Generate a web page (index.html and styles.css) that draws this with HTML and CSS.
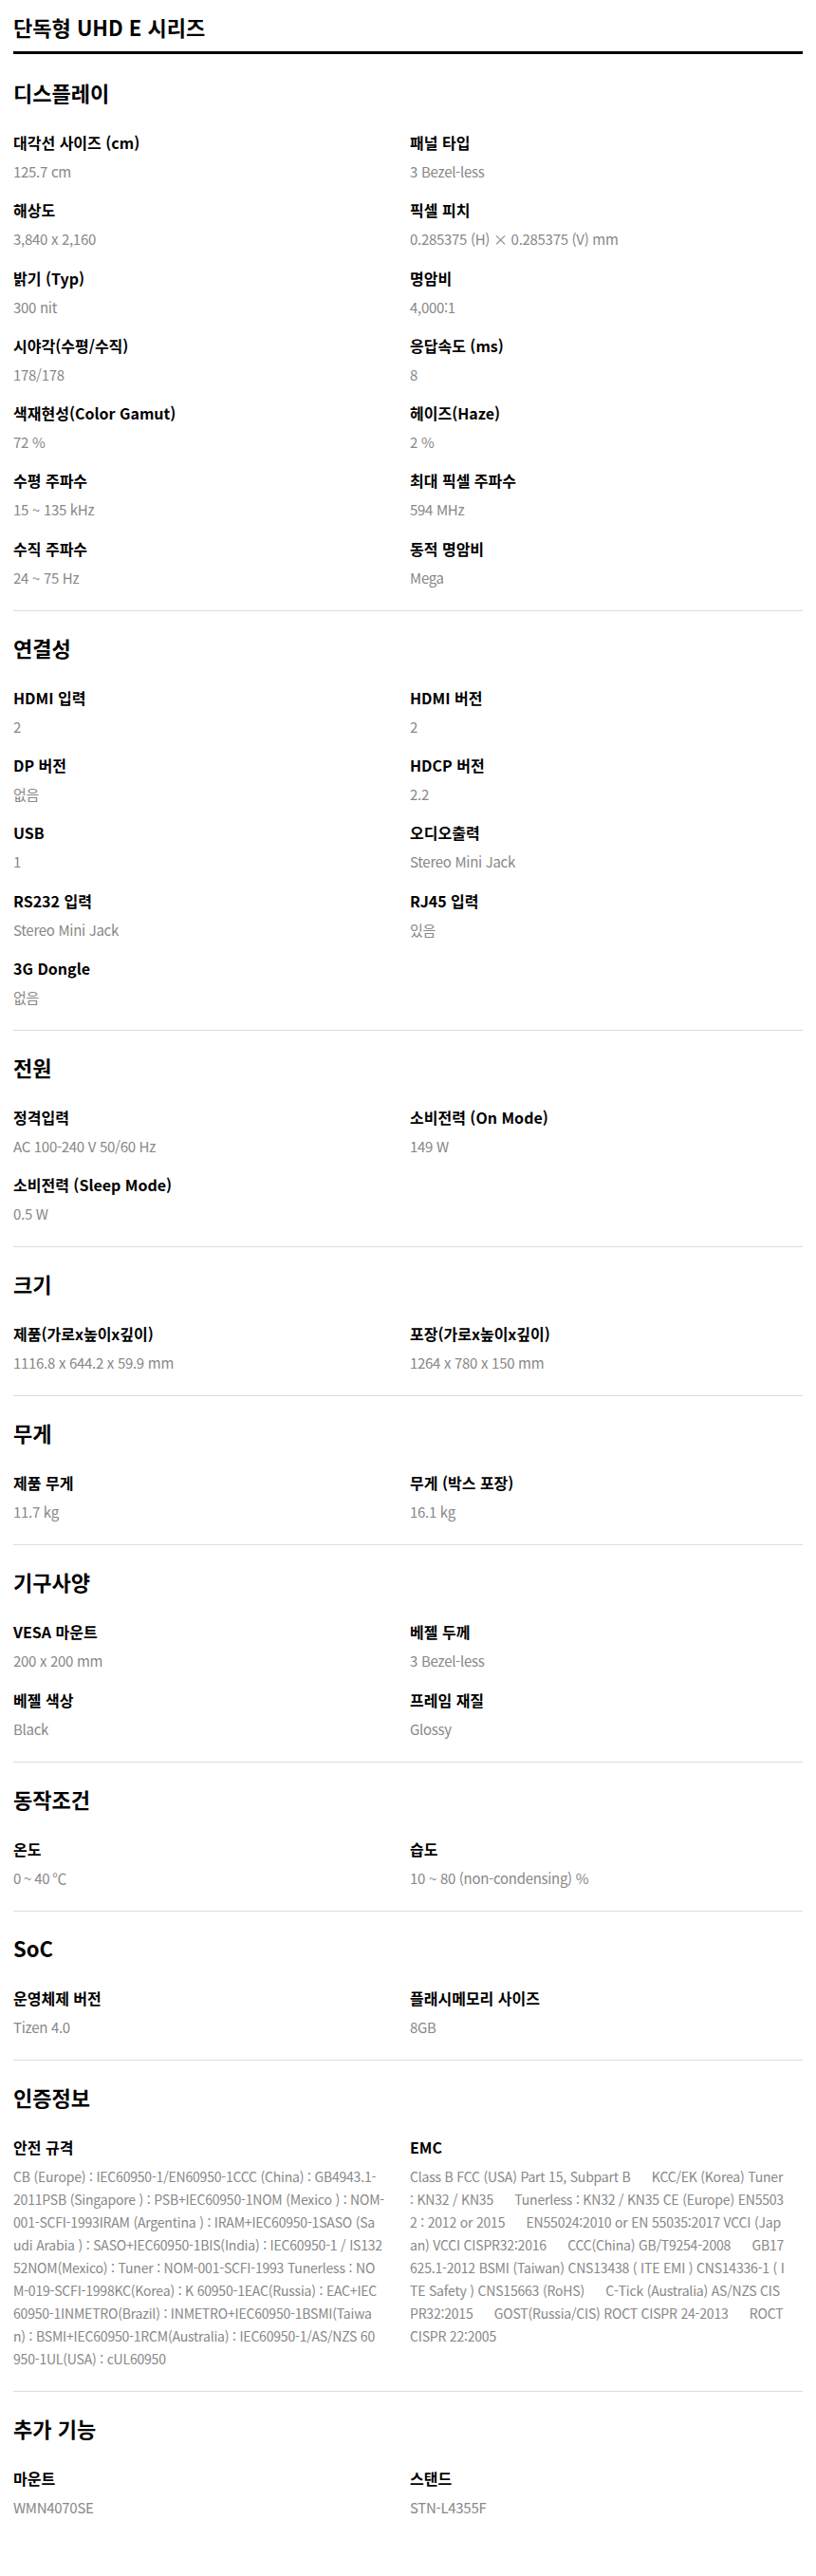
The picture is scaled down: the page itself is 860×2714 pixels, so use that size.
FILE: index.html
```html
<!DOCTYPE html>
<html lang="ko">
<head>
    <meta charset="UTF-8">
    <meta name="viewport" content="width=device-width, initial-scale=1.0">
    <title>단독형 UHD E 시리즈 사양</title>
    <link rel="stylesheet" href="styles.css">
</head>
<body>
    <div class="spec-page">
        <h1 class="spec-title">단독형 UHD E 시리즈</h1>

        <!-- 디스플레이 -->
        <section class="spec-section">
            <h2 class="section-title">디스플레이</h2>
            <div class="spec-grid">
                <div class="spec-item"><div class="spec-label">대각선 사이즈 (cm)</div><div class="spec-value">125.7 cm</div></div>
                <div class="spec-item"><div class="spec-label">패널 타입</div><div class="spec-value">3 Bezel-less</div></div>
                <div class="spec-item"><div class="spec-label">해상도</div><div class="spec-value">3,840 x 2,160</div></div>
                <div class="spec-item"><div class="spec-label">픽셀 피치</div><div class="spec-value">0.285375 (H) × 0.285375 (V) mm</div></div>
                <div class="spec-item"><div class="spec-label">밝기 (Typ)</div><div class="spec-value">300 nit</div></div>
                <div class="spec-item"><div class="spec-label">명암비</div><div class="spec-value">4,000:1</div></div>
                <div class="spec-item"><div class="spec-label">시야각(수평/수직)</div><div class="spec-value">178/178</div></div>
                <div class="spec-item"><div class="spec-label">응답속도 (ms)</div><div class="spec-value">8</div></div>
                <div class="spec-item"><div class="spec-label">색재현성(Color Gamut)</div><div class="spec-value">72 %</div></div>
                <div class="spec-item"><div class="spec-label">헤이즈(Haze)</div><div class="spec-value">2 %</div></div>
                <div class="spec-item"><div class="spec-label">수평 주파수</div><div class="spec-value">15 ~ 135 kHz</div></div>
                <div class="spec-item"><div class="spec-label">최대 픽셀 주파수</div><div class="spec-value">594 MHz</div></div>
                <div class="spec-item"><div class="spec-label">수직 주파수</div><div class="spec-value">24 ~ 75 Hz</div></div>
                <div class="spec-item"><div class="spec-label">동적 명암비</div><div class="spec-value">Mega</div></div>
            </div>
        </section>

        <!-- 연결성 -->
        <section class="spec-section">
            <h2 class="section-title">연결성</h2>
            <div class="spec-grid">
                <div class="spec-item"><div class="spec-label">HDMI 입력</div><div class="spec-value">2</div></div>
                <div class="spec-item"><div class="spec-label">HDMI 버전</div><div class="spec-value">2</div></div>
                <div class="spec-item"><div class="spec-label">DP 버전</div><div class="spec-value">없음</div></div>
                <div class="spec-item"><div class="spec-label">HDCP 버전</div><div class="spec-value">2.2</div></div>
                <div class="spec-item"><div class="spec-label">USB</div><div class="spec-value">1</div></div>
                <div class="spec-item"><div class="spec-label">오디오출력</div><div class="spec-value">Stereo Mini Jack</div></div>
                <div class="spec-item"><div class="spec-label">RS232 입력</div><div class="spec-value">Stereo Mini Jack</div></div>
                <div class="spec-item"><div class="spec-label">RJ45 입력</div><div class="spec-value">있음</div></div>
                <div class="spec-item"><div class="spec-label">3G Dongle</div><div class="spec-value">없음</div></div>
            </div>
        </section>

        <!-- 전원 -->
        <section class="spec-section">
            <h2 class="section-title">전원</h2>
            <div class="spec-grid">
                <div class="spec-item"><div class="spec-label">정격입력</div><div class="spec-value">AC 100-240 V 50/60 Hz</div></div>
                <div class="spec-item"><div class="spec-label">소비전력 (On Mode)</div><div class="spec-value">149 W</div></div>
                <div class="spec-item"><div class="spec-label">소비전력 (Sleep Mode)</div><div class="spec-value">0.5 W</div></div>
            </div>
        </section>

        <!-- 크기 -->
        <section class="spec-section">
            <h2 class="section-title">크기</h2>
            <div class="spec-grid">
                <div class="spec-item"><div class="spec-label">제품(가로x높이x깊이)</div><div class="spec-value">1116.8 x 644.2 x 59.9 mm</div></div>
                <div class="spec-item"><div class="spec-label">포장(가로x높이x깊이)</div><div class="spec-value">1264 x 780 x 150 mm</div></div>
            </div>
        </section>

        <!-- 무게 -->
        <section class="spec-section">
            <h2 class="section-title">무게</h2>
            <div class="spec-grid">
                <div class="spec-item"><div class="spec-label">제품 무게</div><div class="spec-value">11.7 kg</div></div>
                <div class="spec-item"><div class="spec-label">무게 (박스 포장)</div><div class="spec-value">16.1 kg</div></div>
            </div>
        </section>

        <!-- 기구사양 -->
        <section class="spec-section">
            <h2 class="section-title">기구사양</h2>
            <div class="spec-grid">
                <div class="spec-item"><div class="spec-label">VESA 마운트</div><div class="spec-value">200 x 200 mm</div></div>
                <div class="spec-item"><div class="spec-label">베젤 두께</div><div class="spec-value">3 Bezel-less</div></div>
                <div class="spec-item"><div class="spec-label">베젤 색상</div><div class="spec-value">Black</div></div>
                <div class="spec-item"><div class="spec-label">프레임 재질</div><div class="spec-value">Glossy</div></div>
            </div>
        </section>

        <!-- 동작조건 -->
        <section class="spec-section">
            <h2 class="section-title">동작조건</h2>
            <div class="spec-grid">
                <div class="spec-item"><div class="spec-label">온도</div><div class="spec-value">0 ~ 40 ℃</div></div>
                <div class="spec-item"><div class="spec-label">습도</div><div class="spec-value">10 ~ 80 (non-condensing) %</div></div>
            </div>
        </section>

        <!-- SoC -->
        <section class="spec-section">
            <h2 class="section-title">SoC</h2>
            <div class="spec-grid">
                <div class="spec-item"><div class="spec-label">운영체제 버전</div><div class="spec-value">Tizen 4.0</div></div>
                <div class="spec-item"><div class="spec-label">플래시메모리 사이즈</div><div class="spec-value">8GB</div></div>
            </div>
        </section>

        <!-- 인증정보 -->
        <section class="spec-section">
            <h2 class="section-title">인증정보</h2>
            <div class="spec-grid">
                <div class="spec-item"><div class="spec-label">안전 규격</div><div class="spec-value long">CB (Europe) : IEC60950-1/EN60950-1CCC (China) : GB4943.1-<br>2011PSB (Singapore ) : PSB+IEC60950-1NOM (Mexico ) : NOM-<br>001-SCFI-1993IRAM (Argentina ) : IRAM+IEC60950-1SASO (Sa<br>udi Arabia ) : SASO+IEC60950-1BIS(India) : IEC60950-1 / IS132<br>52NOM(Mexico) : Tuner : NOM-001-SCFI-1993 Tunerless : NO<br>M-019-SCFI-1998KC(Korea) : K 60950-1EAC(Russia) : EAC+IEC<br>60950-1INMETRO(Brazil) : INMETRO+IEC60950-1BSMI(Taiwa<br>n) : BSMI+IEC60950-1RCM(Australia) : IEC60950-1/AS/NZS 60<br>950-1UL(USA) : cUL60950</div></div>
                <div class="spec-item"><div class="spec-label">EMC</div><div class="spec-value long">Class B FCC (USA) Part 15, Subpart B      KCC/EK (Korea) Tuner<br>: KN32 / KN35      Tunerless : KN32 / KN35 CE (Europe) EN5503<br>2 : 2012 or 2015      EN55024:2010 or EN 55035:2017 VCCI (Jap<br>an) VCCI CISPR32:2016      CCC(China) GB/T9254-2008      GB17<br>625.1-2012 BSMI (Taiwan) CNS13438 ( ITE EMI ) CNS14336-1 ( I<br>TE Safety ) CNS15663 (RoHS)      C-Tick (Australia) AS/NZS CIS<br>PR32:2015      GOST(Russia/CIS) ROCT CISPR 24-2013      ROCT<br>CISPR 22:2005</div></div>
            </div>
        </section>

        <!-- 추가 기능 -->
        <section class="spec-section last">
            <h2 class="section-title">추가 기능</h2>
            <div class="spec-grid">
                <div class="spec-item"><div class="spec-label">마운트</div><div class="spec-value">WMN4070SE</div></div>
                <div class="spec-item"><div class="spec-label">스탠드</div><div class="spec-value">STN-L4355F</div></div>
            </div>
        </section>
    </div>
</body>
</html>
```

FILE: styles.css
```css
body {
    margin: 0;
    padding: 0;
    background: #fff;
    color: #000;
    font-family: "Noto Sans CJK KR", "Noto Sans", sans-serif;
}
.spec-page {
    padding: 0 14px;
}
.spec-title {
    margin: 0;
    padding: 12px 0 10px;
    font-size: 22px;
    line-height: 32px;
    font-weight: 700;
    border-bottom: 3px solid #000;
}
.spec-section {
    padding: 22px 0;
    border-bottom: 1px solid #dddddd;
}
.spec-title + .spec-section {
    padding-top: 24px;
}
.spec-section.last {
    border-bottom: none;
}
.section-title {
    margin: 0 0 25px;
    font-size: 22px;
    line-height: 32px;
    font-weight: 700;
}
.spec-grid {
    display: grid;
    grid-template-columns: 1fr 1fr;
    column-gap: 4px;
    row-gap: 16.3px;
}
.spec-label {
    font-size: 16px;
    line-height: 24px;
    font-weight: 700;
    color: #000;
}
.spec-value {
    margin-top: 7px;
    font-size: 15px;
    line-height: 24px;
    letter-spacing: -0.3px;
    color: #888;
}
.spec-value.long {
    font-size: 14px;
    letter-spacing: -0.2px;
    white-space: pre;
}
```
